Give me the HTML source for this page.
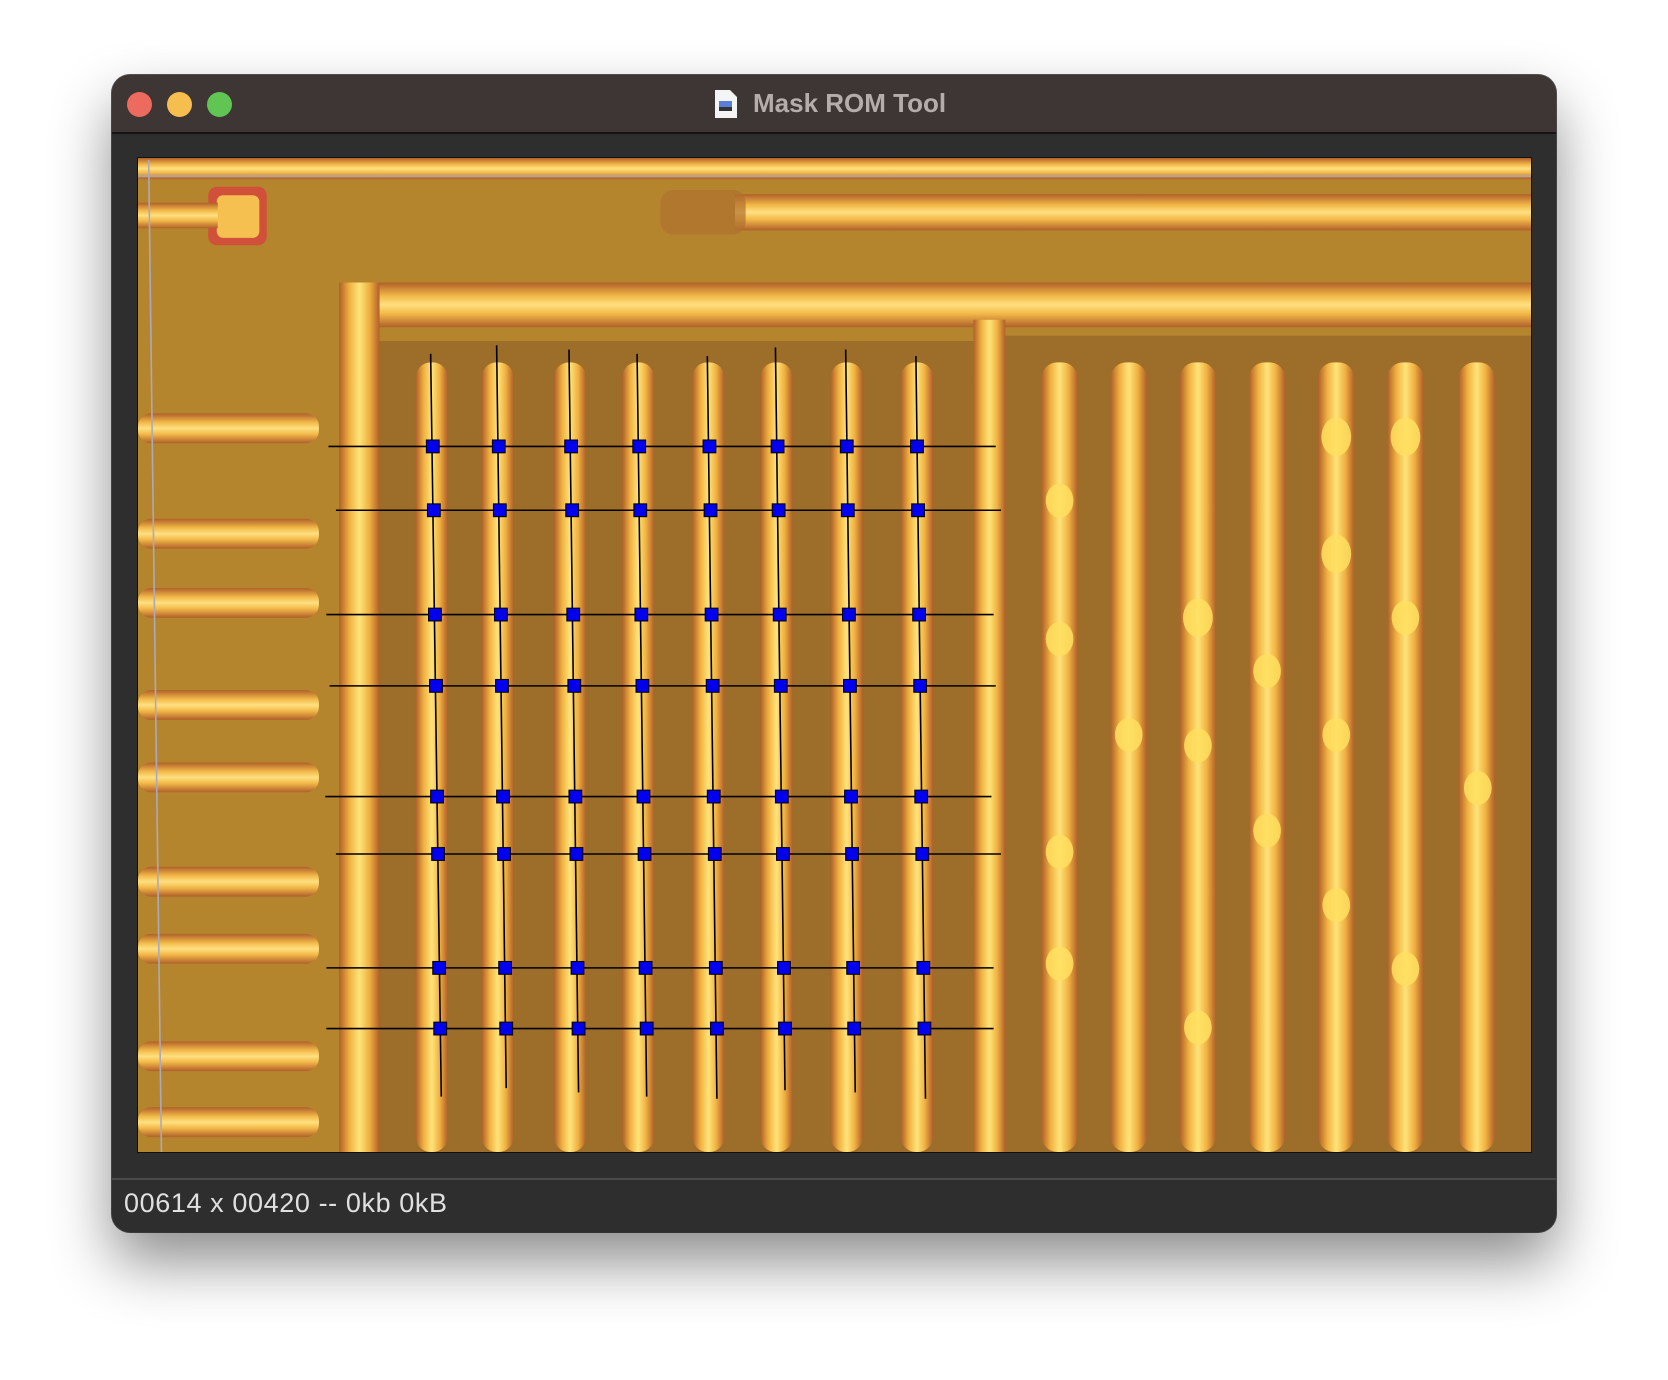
<!DOCTYPE html>
<html><head><meta charset="utf-8"><style>
html,body{margin:0;padding:0;width:1668px;height:1380px;background:#fff;overflow:hidden;font-family:"Liberation Sans",sans-serif}
.win{position:absolute;left:112px;top:75px;width:1444px;height:1157px;border-radius:18px;background:#2e2e2e;box-shadow:0 30px 60px rgba(0,0,0,.45),0 0 0 1px #555;overflow:hidden}
.tb{position:absolute;left:0;top:0;width:100%;height:57px;background:#3e3634;border-bottom:2px solid #151515}
.dot{position:absolute;top:17px;width:25px;height:25px;border-radius:50%}
.title{position:absolute;left:641px;top:13px;font-size:26px;font-weight:bold;color:#b5adab}
.img{position:absolute;left:25px;top:82px;width:1393px;height:994px;border:1px solid #111}
.sep{position:absolute;left:0;top:1103px;width:100%;height:2px;background:#4a4a4a}
.st{position:absolute;left:12px;top:1113px;font-size:27px;letter-spacing:0.6px;color:#e0e0e0}
</style></head><body>
<div class="win">
<div class="tb">
<div class="dot" style="left:15px;background:#ed6a5e"></div>
<div class="dot" style="left:55px;background:#f5be4f"></div>
<div class="dot" style="left:95px;background:#61c554"></div>
<svg style="position:absolute;left:602px;top:14px" width="24" height="30" viewBox="0 0 24 30"><path d="M1 1h15l7 7v21H1z" fill="#f4f4f4"/><rect x="5" y="12" width="13" height="6" fill="#5a7fd8"/><rect x="5" y="18" width="13" height="4" fill="#333"/></svg>
<div class="title">Mask ROM Tool</div>
</div>
<svg class="img" viewBox="129 148 1309 934" preserveAspectRatio="none">
<defs>
<linearGradient id="vs" x1="0" x2="1" y1="0" y2="0"><stop offset="0" stop-color="#b0602a"/><stop offset=".25" stop-color="#f0b040"/><stop offset=".5" stop-color="#ffe47a"/><stop offset=".75" stop-color="#f0b040"/><stop offset="1" stop-color="#b0602a"/></linearGradient>
<linearGradient id="hs" x1="0" x2="0" y1="0" y2="1"><stop offset="0" stop-color="#b0602a"/><stop offset=".3" stop-color="#f2b848"/><stop offset=".5" stop-color="#ffe080"/><stop offset=".7" stop-color="#f2b848"/><stop offset="1" stop-color="#b0602a"/></linearGradient>
<pattern id="bul" x="0" y="0" width="65" height="65" patternUnits="userSpaceOnUse"><ellipse cx="12" cy="20" rx="12" ry="14" fill="#ffe060"/></pattern>
</defs>
<rect x="129" y="148" width="1309" height="934" fill="#b5852e"/>
<rect x="350" y="320" width="565" height="762" fill="#9c6e2a"/>
<rect x="940" y="315" width="498" height="767" fill="#9c6e2a"/>
<rect x="129" y="148" width="1309" height="20" fill="url(#hs)"/>
<rect x="690" y="182" width="748" height="34" fill="url(#hs)"/>
<rect x="620" y="178" width="80" height="42" rx="12" fill="#b07030" opacity=".7"/>
<rect x="195" y="175" width="55" height="55" rx="8" fill="#d0503a"/><rect x="203" y="183" width="40" height="40" rx="6" fill="#f5c050"/>
<rect x="129" y="190" width="75" height="24" fill="url(#hs)"/>
<rect x="320" y="265" width="1118" height="42" fill="url(#hs)"/>
<rect x="318" y="265" width="38" height="817" fill="url(#vs)"/>
<rect x="914" y="300" width="30" height="782" fill="url(#vs)"/>
<g fill="url(#hs)">
<rect x="129" y="388" width="170" height="28" rx="12"/><rect x="129" y="487" width="170" height="28" rx="12"/><rect x="129" y="552" width="170" height="28" rx="12"/><rect x="129" y="648" width="170" height="28" rx="12"/><rect x="129" y="716" width="170" height="28" rx="12"/><rect x="129" y="814" width="170" height="28" rx="12"/><rect x="129" y="877" width="170" height="28" rx="12"/><rect x="129" y="978" width="170" height="28" rx="12"/><rect x="129" y="1040" width="170" height="28" rx="12"/>
</g>
<g fill="url(#vs)">
<rect x="390" y="340" width="30" height="742" rx="14"/><rect x="452" y="340" width="30" height="742" rx="14"/><rect x="520" y="340" width="30" height="742" rx="14"/><rect x="584" y="340" width="30" height="742" rx="14"/><rect x="650" y="340" width="30" height="742" rx="14"/><rect x="714" y="340" width="30" height="742" rx="14"/><rect x="780" y="340" width="30" height="742" rx="14"/><rect x="846" y="340" width="30" height="742" rx="14"/>
<rect x="978" y="340" width="34" height="742" rx="15"/><rect x="1043" y="340" width="34" height="742" rx="15"/><rect x="1108" y="340" width="34" height="742" rx="15"/><rect x="1173" y="340" width="34" height="742" rx="15"/><rect x="1238" y="340" width="34" height="742" rx="15"/><rect x="1303" y="340" width="34" height="742" rx="15"/><rect x="1370" y="340" width="34" height="742" rx="15"/>
</g>
<g fill="#ffe060" opacity=".85">
<ellipse cx="995" cy="470" rx="13" ry="16"/><ellipse cx="995" cy="600" rx="13" ry="16"/><ellipse cx="995" cy="800" rx="13" ry="16"/><ellipse cx="995" cy="905" rx="13" ry="16"/>
<ellipse cx="1125" cy="580" rx="14" ry="18"/><ellipse cx="1125" cy="700" rx="13" ry="16"/><ellipse cx="1125" cy="965" rx="13" ry="16"/>
<ellipse cx="1190" cy="630" rx="13" ry="16"/><ellipse cx="1190" cy="780" rx="13" ry="16"/>
<ellipse cx="1255" cy="410" rx="14" ry="18"/><ellipse cx="1255" cy="520" rx="14" ry="18"/><ellipse cx="1255" cy="690" rx="13" ry="16"/><ellipse cx="1255" cy="850" rx="13" ry="16"/>
<ellipse cx="1320" cy="410" rx="14" ry="18"/><ellipse cx="1320" cy="580" rx="13" ry="16"/><ellipse cx="1320" cy="910" rx="13" ry="16"/>
<ellipse cx="1388" cy="740" rx="13" ry="16"/><ellipse cx="1060" cy="690" rx="13" ry="16"/>
</g>
<line x1="129" y1="165" x2="1438" y2="165" stroke="#aab" stroke-width="1.5"/>
<line x1="139" y1="150" x2="151" y2="1082" stroke="#aab" stroke-width="1.5"/>
<g stroke="#000" stroke-width="1.5">
<line x1="308" y1="419" x2="935" y2="419"/><line x1="315" y1="479" x2="940" y2="479"/><line x1="306" y1="577" x2="933" y2="577"/><line x1="309" y1="644" x2="935" y2="644"/><line x1="305" y1="748" x2="931" y2="748"/><line x1="315" y1="802" x2="940" y2="802"/><line x1="306" y1="909" x2="933" y2="909"/><line x1="306" y1="966" x2="933" y2="966"/>
<line x1="404" y1="332" x2="414" y2="1030"/><line x1="466" y1="324" x2="475" y2="1022"/><line x1="534" y1="328" x2="543" y2="1026"/><line x1="598" y1="332" x2="607" y2="1030"/><line x1="664" y1="334" x2="673" y2="1032"/><line x1="728" y1="326" x2="737" y2="1024"/><line x1="794" y1="328" x2="803" y2="1026"/><line x1="860" y1="334" x2="869" y2="1032"/>
</g>
<g fill="#0000ee" stroke="#000" stroke-width="1">
<g id="r1"><rect x="400" y="413" width="12" height="12"/><rect x="462" y="413" width="12" height="12"/><rect x="530" y="413" width="12" height="12"/><rect x="594" y="413" width="12" height="12"/><rect x="660" y="413" width="12" height="12"/><rect x="724" y="413" width="12" height="12"/><rect x="789" y="413" width="12" height="12"/><rect x="855" y="413" width="12" height="12"/></g>
<use href="#r1" transform="translate(1,60)"/><use href="#r1" transform="translate(2,158)"/><use href="#r1" transform="translate(3,225)"/><use href="#r1" transform="translate(4,329)"/><use href="#r1" transform="translate(5,383)"/><use href="#r1" transform="translate(6,490)"/><use href="#r1" transform="translate(7,547)"/>
</g>
</svg>
<div class="sep"></div>
<div class="st">00614 x 00420 -- 0kb 0kB</div>
</div>
</body></html>
